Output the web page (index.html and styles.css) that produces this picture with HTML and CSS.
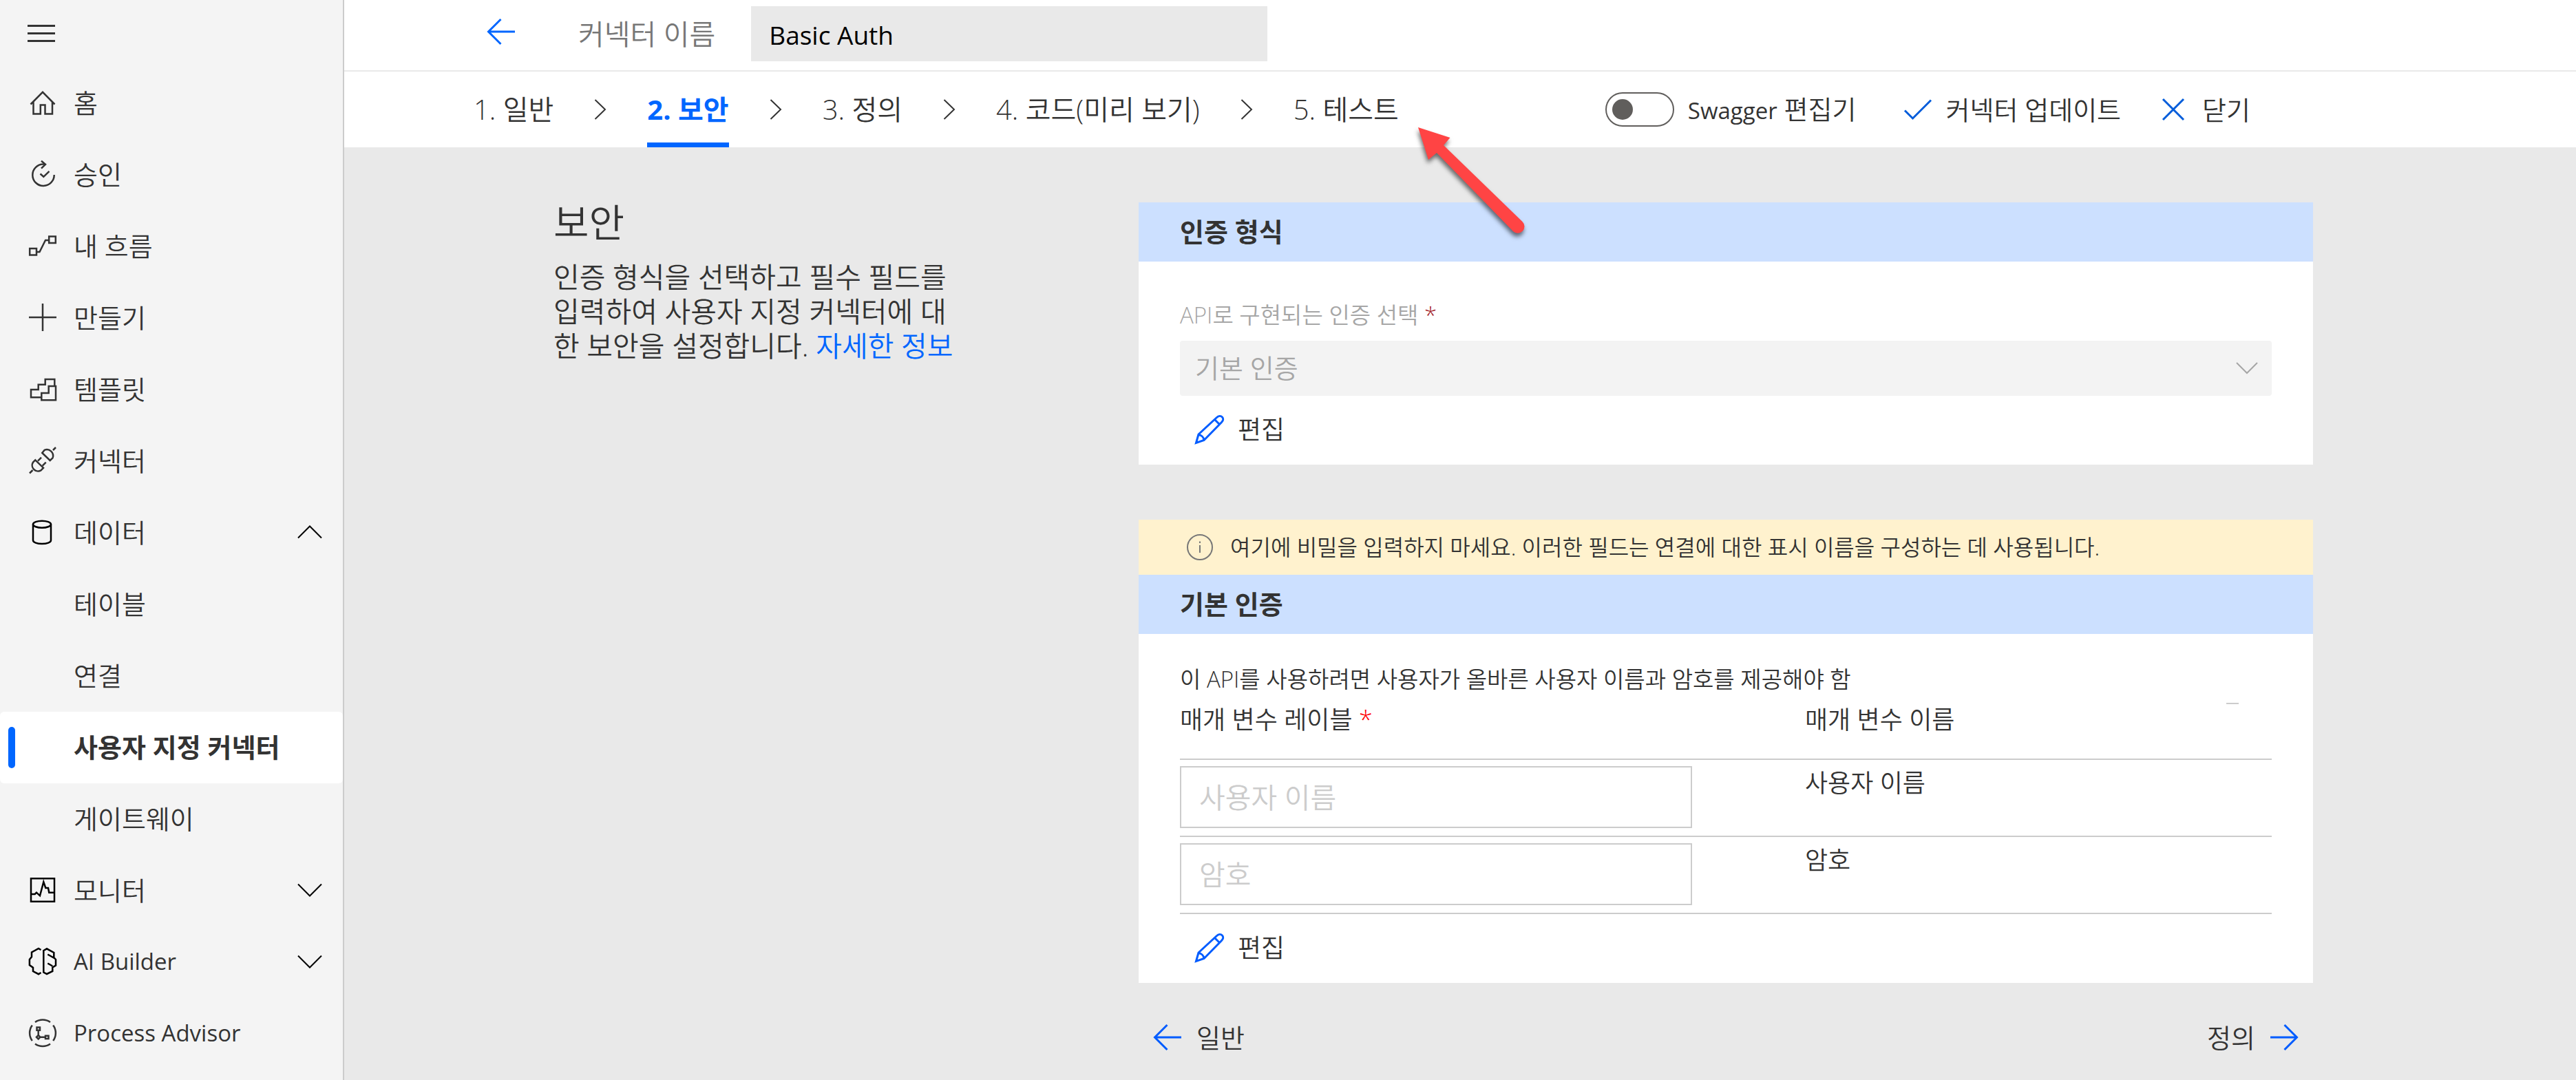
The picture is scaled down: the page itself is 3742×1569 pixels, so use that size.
FILE: index.html
```html
<!DOCTYPE html>
<html lang="ko">
<head>
<meta charset="utf-8">
<title>사용자 지정 커넥터 - 보안</title>
<link rel="stylesheet" href="styles.css">
</head>
<body>
<nav class="sidebar">
  <button class="menu-button" type="button" aria-label="메뉴">
    <svg width="40" height="26" viewBox="0 0 40 26"><path d="M0 1.5H40M0 12.5H40M0 23.5H40" stroke="#333" stroke-width="3"/></svg>
  </button>
  <ul class="nav-list">
    <li><a class="nav-item" href="#"><svg class="icon" viewBox="0 0 40 40"><path d="M2.5 22.5L20 4.8L37.5 22.5M6.5 19V36.5H16.8V23.5H23.5V36.5H34V19"/></svg><span>홈</span></a></li>
    <li><a class="nav-item" href="#"><svg class="icon" viewBox="0 0 40 40"><path d="M36.7 21A15.7 15.7 0 1 1 21 5.6H24M18 .8L24 5.8L18 11.6M16.5 19.5L21.3 23.8L29.5 15.8"/></svg><span>승인</span></a></li>
    <li><a class="nav-item" href="#"><svg class="icon" viewBox="0 0 40 40"><path d="M29.2 6.5H38.8V16.1H29.2ZM1.2 23.9H11V33.5H1.2ZM11 29H15.5L24 12H29"/></svg><span>내 흐름</span></a></li>
    <li><a class="nav-item" href="#"><svg class="icon" viewBox="0 0 40 40"><path d="M20 0V40M0 20H40"/></svg><span>만들기</span></a></li>
    <li><a class="nav-item" href="#"><svg class="icon" viewBox="0 0 40 40"><path d="M18.3 32.3H3V21H13.7V13.7H23.7V6H37.3V16M18.3 36.3V26H28.7V16H39V36.3Z"/></svg><span>템플릿</span></a></li>
    <li><a class="nav-item" href="#"><svg class="icon" viewBox="0 0 40 40"><path d="M19.3 9L30.7 20L34.5 16.3A9 9 0 0 0 22.5 4.9ZM35 5L39 1M9.3 19.3L21 30.7L17.5 34.3A8.5 8.5 0 0 1 6 22.5ZM5.5 34L1 38.5M13 20.7L18 15.7M19.7 27.7L24.7 22.7"/></svg><span>커넥터</span></a></li>
    <li>
      <button class="nav-item nav-toggle" type="button" aria-expanded="true"><svg class="icon icon-black" viewBox="0 0 40 40"><ellipse cx="19" cy="8.7" rx="13" ry="5"/><path d="M6 8.7V32C6 34.8 11.8 37 19 37S32 34.8 32 32V8.7"/></svg><span>데이터</span><svg class="nav-chevron" viewBox="0 0 36 20"><path d="M1 18.5L18 1.5L35 18.5"/></svg></button>
      <ul class="nav-list">
        <li><a class="nav-item nav-sub" href="#">테이블</a></li>
        <li><a class="nav-item nav-sub" href="#">연결</a></li>
        <li><a class="nav-item nav-sub nav-active" href="#" aria-current="page">사용자 지정 커넥터</a></li>
        <li><a class="nav-item nav-sub" href="#">게이트웨이</a></li>
      </ul>
    </li>
    <li><button class="nav-item nav-toggle" type="button" aria-expanded="false"><svg class="icon icon-black" viewBox="0 0 40 40"><path d="M3 3.3H37V36.7H3ZM4 26H8.7L11 23.7L16 28.3L21.3 8.3L24.3 17H28L29.3 23.7H36"/></svg><span>모니터</span><svg class="nav-chevron" viewBox="0 0 36 20"><path d="M1 1.5L18 18.5L35 1.5"/></svg></button></li>
    <li><button class="nav-item nav-toggle" type="button" aria-expanded="false"><svg class="icon icon-black" viewBox="0 0 40 40"><path d="M17.5 3L14 .9L4 6.5V13L.9 17V25L6 28.7V34L14 38.2L17.5 36M21.3 4L26 1.3L36.3 7V14L39 17V25.5L34.3 28.5V34L26 38L21.3 35.5ZM27.3 9.5L37 15M27.3 22.5L34.3 26.5"/></svg><span class="latin">AI Builder</span><svg class="nav-chevron" viewBox="0 0 36 20"><path d="M1 1.5L18 18.5L35 1.5"/></svg></button></li>
    <li><a class="nav-item" href="#"><svg class="icon" viewBox="0 0 40 40"><path d="M9 4A19 19 0 0 1 31 4M9 35.4A19 19 0 0 0 31 35.4M4.8 8.5A19 19 0 0 0 4.8 31M35.2 8.5A19 19 0 0 1 35.2 31M11.5 11.5H16V15.8H11.5ZM13.7 16V23L16.4 25.7L13.7 28.4L11 25.7L13.7 23M16.4 25.7H24M24 23.7H28.5V28H24Z"/></svg><span class="latin">Process Advisor</span></a></li>
  </ul>
</nav>

<main class="main">
  <header class="name-bar">
    <button class="back-button" type="button" aria-label="뒤로"><svg width="40" height="38" viewBox="0 0 40 38"><path d="M40 19H1.5M19.5 1L1.5 19L19.5 37"/></svg></button>
    <label class="name-label" for="connector-name">커넥터 이름</label>
    <input class="name-input" id="connector-name" type="text" value="Basic Auth">
  </header>

  <div class="step-bar">
    <ol class="steps">
      <li><a class="step" href="#">1. 일반</a></li>
      <li class="step-sep"><svg width="18" height="30" viewBox="0 0 18 30"><path d="M1.5 1L16 15L1.5 29"/></svg></li>
      <li><a class="step step-current" href="#" aria-current="step">2. 보안</a></li>
      <li class="step-sep"><svg width="18" height="30" viewBox="0 0 18 30"><path d="M1.5 1L16 15L1.5 29"/></svg></li>
      <li><a class="step" href="#">3. 정의</a></li>
      <li class="step-sep"><svg width="18" height="30" viewBox="0 0 18 30"><path d="M1.5 1L16 15L1.5 29"/></svg></li>
      <li><a class="step" href="#">4. 코드(미리 보기)</a></li>
      <li class="step-sep"><svg width="18" height="30" viewBox="0 0 18 30"><path d="M1.5 1L16 15L1.5 29"/></svg></li>
      <li><a class="step" href="#">5. 테스트</a></li>
    </ol>
    <div class="toolbar">
      <div class="switch">
        <input class="switch-input" id="swagger" type="checkbox" role="switch">
        <label for="swagger"><span class="latin">Swagger</span> 편집기</label>
      </div>
      <button class="tool-button" type="button"><svg width="40" height="30" viewBox="0 0 40 30"><path d="M1 16.5L12.5 28L39 1.5"/></svg>커넥터 업데이트</button>
      <button class="tool-button tool-close" type="button"><svg width="32" height="32" viewBox="0 0 32 32"><path d="M1 1L31 31M31 1L1 31"/></svg>닫기</button>
    </div>
  </div>

  <div class="content">
    <section class="intro">
      <h1>보안</h1>
      <p>인증 형식을 선택하고 필수 필드를 입력하여 사용자 지정 커넥터에 대한 보안을 설정합니다. <a href="#">자세한 정보</a></p>
    </section>

    <div class="panels">
      <section class="card">
        <h2 class="card-title">인증 형식</h2>
        <div class="card-body auth-body">
          <label class="field-label" for="auth-type">API로 구현되는 인증 선택 <span class="required-dark">*</span></label>
          <div class="select-wrap">
            <select id="auth-type" disabled><option>기본 인증</option></select>
            <svg class="select-chevron" width="32" height="18" viewBox="0 0 32 18"><path d="M1 1L16 16L31 1"/></svg>
          </div>
          <button class="edit-button" type="button"><svg width="42" height="42" viewBox="0 0 42 42"><path d="M1.5 40.5L5 28L31.5 3.5C34 1 37.5 1 39.5 3S41 8 38.5 10.5L13 36.5ZM5 28.5C9 29 12.5 32 13 36.5M28.5 6.5L35.5 13.5"/></svg>편집</button>
        </div>
      </section>

      <section class="card">
        <div class="notice"><svg width="40" height="40" viewBox="0 0 40 40"><circle cx="20" cy="20" r="18"/><path d="M20 17V28M20 11.5V14"/></svg><span>여기에 비밀을 입력하지 마세요. 이러한 필드는 연결에 대한 표시 이름을 구성하는 데 사용됩니다.</span></div>
        <h2 class="card-title">기본 인증</h2>
        <div class="card-body basic-body">
          <p class="description">이 API를 사용하려면 사용자가 올바른 사용자 이름과 암호를 제공해야 함</p>
          <table class="params">
            <thead>
              <tr><th class="col-label">매개 변수 레이블 <span class="required">*</span></th><th>매개 변수 이름</th><td class="col-mark"><svg width="18" height="2" viewBox="0 0 18 2"><path d="M0 1H18"/></svg></td></tr>
            </thead>
            <tbody>
              <tr><td><input type="text" placeholder="사용자 이름" aria-label="사용자 이름"></td><td>사용자 이름</td><td></td></tr>
              <tr><td><input type="text" placeholder="암호" aria-label="암호"></td><td>암호</td><td></td></tr>
            </tbody>
          </table>
          <button class="edit-button" type="button"><svg width="42" height="42" viewBox="0 0 42 42"><path d="M1.5 40.5L5 28L31.5 3.5C34 1 37.5 1 39.5 3S41 8 38.5 10.5L13 36.5ZM5 28.5C9 29 12.5 32 13 36.5M28.5 6.5L35.5 13.5"/></svg>편집</button>
        </div>
      </section>

      <div class="pager">
        <button type="button"><svg width="40" height="38" viewBox="0 0 40 38"><path d="M40 19H1.5M19.5 1L1.5 19L19.5 37"/></svg>일반</button>
        <button type="button">정의<svg width="40" height="38" viewBox="0 0 40 38"><path d="M0 19H38.5M20.5 1L38.5 19L20.5 37"/></svg></button>
      </div>
    </div>
  </div>

  <svg class="pointer" width="180" height="180" viewBox="0 0 180 180" aria-hidden="true">
    <path d="M10 10L56.5 25L47 36L161.5 147A9.5 9.5 0 0 1 148 161L37 47L25 57Z"/>
  </svg>
</main>
</body>
</html>
```
FILE: styles.css
```css
* {
  box-sizing: border-box;
}

body {
  display: flex;
  min-height: 100vh;
  margin: 0;
  background: #e9e9e9;
  color: #333;
  font-family: "Open Sans", "Noto Sans CJK KR", sans-serif;
  font-size: 38px;
  font-weight: 350;
  line-height: 50px;
}

button,
input,
select {
  padding: 0;
  border: 0;
  background: none;
  color: inherit;
  font: inherit;
}

a {
  color: #06f;
  text-decoration: none;
}

svg {
  flex: none;
  fill: none;
  overflow: visible;
}

ul,
ol {
  margin: 0;
  padding: 0;
  list-style: none;
}

.latin {
  font-size: 33px;
  font-weight: 400;
}

/* Sidebar */

.sidebar {
  flex: none;
  width: 500px;
  border-right: 2px solid #ccc;
  background: #f4f4f4;
}

.menu-button {
  display: flex;
  align-items: center;
  height: 98px;
  padding: 0 40px;
}

.nav-item {
  display: flex;
  align-items: center;
  gap: 25px;
  width: 100%;
  height: 104px;
  padding: 0 30px 2px 42px;
  color: #333;
  text-align: left;
}

.nav-sub {
  padding-left: 107px;
}

.nav-active {
  position: relative;
  border-radius: 6px;
  background: #fff;
  font-weight: 700;
}

.nav-active::before {
  content: "";
  position: absolute;
  top: 22px;
  left: 12px;
  width: 10px;
  height: 60px;
  border-radius: 5px;
  background: #06f;
}

.icon {
  width: 40px;
  height: 40px;
  stroke: #333;
  stroke-width: 2.5;
}

.icon-black {
  stroke: #000;
}

.nav-chevron {
  width: 36px;
  height: 20px;
  margin-left: auto;
  stroke: #000;
  stroke-width: 2;
}

/* Top bars */

.main {
  position: relative;
  flex: 1;
  min-width: 0;
}

.name-bar {
  display: flex;
  align-items: center;
  height: 104px;
  padding: 0 0 4px 208px;
  border-bottom: 2px solid #e9e9e9;
  background: #fff;
}

.back-button {
  display: flex;
  padding-bottom: 6px;
  stroke: #06f;
  stroke-width: 3;
}

.name-label {
  margin-left: 92px;
  color: #777;
  font-size: 41px;
}

.name-input {
  width: 750px;
  height: 80px;
  margin-left: 52px;
  padding: 2px 26px 0;
  background: #e9e9e9;
  color: #000;
  font-size: 37px;
  font-weight: 400;
}

.step-bar {
  display: flex;
  justify-content: space-between;
  height: 110px;
  padding: 0 473px 0 188px;
  background: #fff;
}

.steps {
  display: flex;
  gap: 59px;
  font-size: 40px;
}

.step {
  display: flex;
  align-items: center;
  height: 110px;
  border-top: 7px solid transparent;
  border-bottom: 7px solid transparent;
  color: #333;
}

.step-current {
  border-bottom-color: #06f;
  color: #06f;
  font-weight: 700;
}

.step-sep {
  display: flex;
  align-items: center;
  stroke: #333;
  stroke-width: 2;
}

.toolbar {
  display: flex;
  align-items: center;
  gap: 70px;
}

.switch {
  display: flex;
  align-items: center;
  gap: 20px;
}

.switch-input {
  display: flex;
  align-items: center;
  width: 100px;
  height: 50px;
  margin: 0;
  padding: 0 8px;
  border: 2px solid #605e5c;
  border-radius: 25px;
  appearance: none;
}

.switch-input::before {
  content: "";
  width: 30px;
  height: 30px;
  border-radius: 50%;
  background: #605e5c;
}

.tool-button {
  display: flex;
  align-items: center;
  gap: 20px;
}

.tool-close {
  gap: 26px;
  margin-left: -10px;
}

.tool-button svg {
  stroke: #015cda;
  stroke-width: 3;
}

/* Page content */

.content {
  display: grid;
  grid-template-columns: 590px 1fr;
  gap: 260px;
  padding: 80px 382px 0 304px;
}

.intro h1 {
  margin: 0 0 27px;
  font-size: 56px;
  font-weight: 350;
  line-height: 56px;
}

.intro p {
  margin: 0;
  font-size: 41px;
}

.intro a {
  display: inline-block;
}

.card {
  margin-bottom: 80px;
  background: #fff;
}

.card + .card {
  margin-bottom: 52px;
}

.card-title {
  margin: 0;
  padding: 17px 60px 19px;
  background: #cce0ff;
  font-size: 38px;
  font-weight: 700;
}

.card-body {
  padding: 0 60px;
}

.auth-body {
  padding-top: 53px;
  padding-bottom: 24px;
}

.field-label {
  display: block;
  color: #a6a6a6;
  font-size: 33px;
}

.required-dark {
  color: #a4262c;
}

.required {
  color: #f00;
}

.select-wrap {
  display: grid;
  align-items: center;
  margin-top: 12px;
}

.select-wrap > * {
  grid-area: 1 / 1;
}

.select-wrap select {
  width: 100%;
  height: 80px;
  padding: 0 22px 2px;
  border-radius: 4px;
  background: #f3f3f3;
  color: #a6a6a6;
  opacity: 1;
  appearance: none;
}

.select-chevron {
  justify-self: end;
  margin-right: 20px;
  stroke: #a6a6a6;
  stroke-width: 2;
}

.edit-button {
  display: flex;
  align-items: center;
  gap: 20px;
  height: 50px;
  margin-top: 24px;
  margin-bottom: 2px;
  padding: 0 22px;
  font-size: 37px;
}

.edit-button svg {
  stroke: #015cff;
  stroke-width: 3;
}

.notice {
  display: flex;
  align-items: center;
  gap: 24px;
  height: 80px;
  padding: 0 60px 0 69px;
  background: #fff2ce;
  font-size: 32px;
}

.notice svg {
  stroke: #777;
  stroke-width: 2;
}

.basic-body {
  padding-top: 41px;
  padding-bottom: 24px;
}

.description {
  margin: 0;
  font-size: 33px;
}

.params {
  width: 100%;
  border-collapse: collapse;
  font-size: 36px;
  table-layout: fixed;
}

.params tr {
  border-bottom: 2px solid #ccc;
}

.params th,
.params td {
  height: 112px;
  padding: 9px 0 11px;
  font-weight: 350;
  text-align: left;
  vertical-align: top;
}

.params thead th,
.params thead td {
  height: 91px;
}

.params .col-label {
  width: 908px;
}

.params .col-mark {
  width: 66px;
  stroke: #ccc;
  stroke-width: 2;
}

.col-mark svg {
  display: block;
}

.params input {
  display: block;
  width: 744px;
  height: 90px;
  padding: 0 26px;
  border: 2px solid #ccc;
  font-size: 41px;
}

.params input::placeholder {
  color: #ccc;
  opacity: 1;
}

.pager {
  display: flex;
  justify-content: space-between;
  padding: 0 22px;
}

.pager button {
  display: flex;
  align-items: center;
  gap: 22px;
  height: 54px;
}

.pager svg {
  stroke: #015cff;
  stroke-width: 3;
}

.pointer {
  position: absolute;
  top: 175px;
  left: 1550px;
  fill: #ff4444;
  filter: drop-shadow(-1px 5px 3px rgba(0, 0, 0, 0.55));
}
```
